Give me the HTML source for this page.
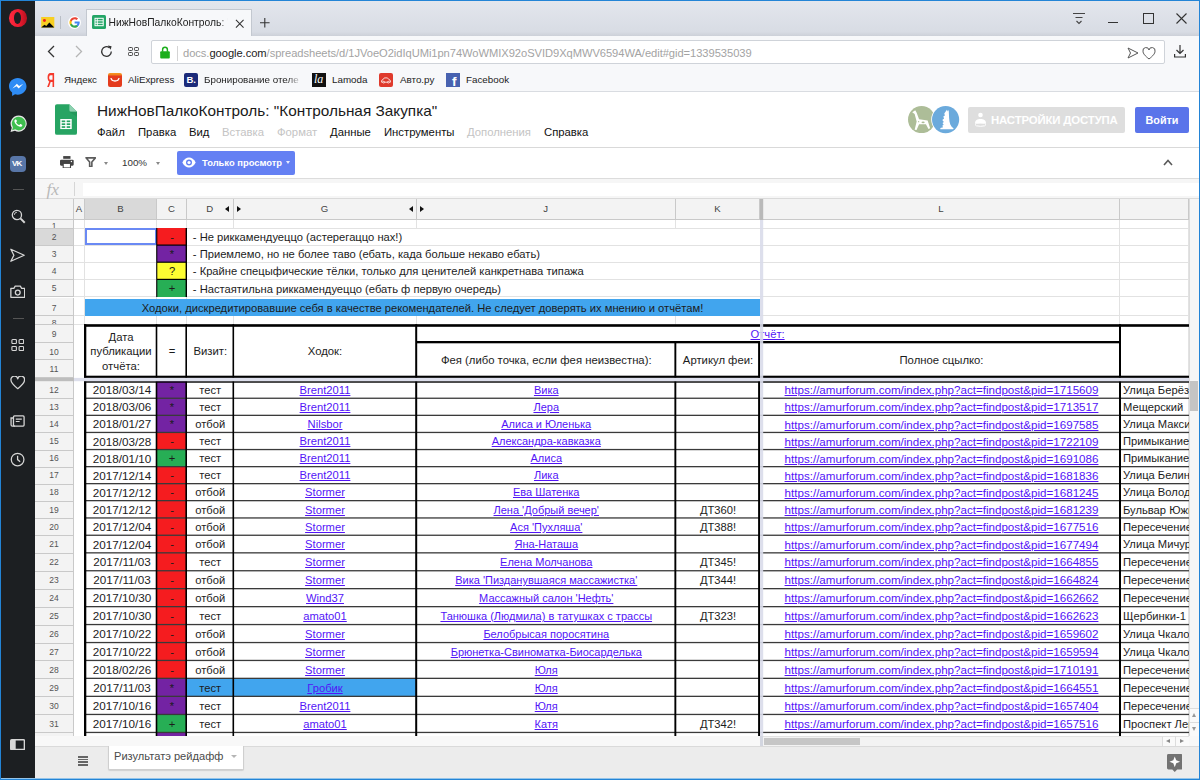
<!DOCTYPE html>
<html lang="ru">
<head>
<meta charset="utf-8">
<title>НижНовПалкоКонтроль: "Контрольная Закупка"</title>
<style>
html,body{margin:0;padding:0;}
body{width:1200px;height:780px;overflow:hidden;position:relative;background:#fff;font-family:"Liberation Sans",sans-serif;color:#222;}
#win{position:absolute;left:0;top:0;width:1200px;height:780px;overflow:hidden;}
#win>div,#grid>div,.abs,#tab,#abox,#menu{position:absolute;}
#frame{left:0;top:0;width:1198px;height:778px;border:1px solid #2384d6;z-index:50;pointer-events:none;box-shadow:inset 0 -1px 0 rgba(42,138,212,.5);}
/* sidebar */
#side{left:1px;top:1px;width:34px;height:777px;background:#1c1f22;}
#side svg,#side div{position:absolute;}
/* tab bar */
#tabs{left:35px;top:1px;width:1164px;height:35px;background:linear-gradient(#e3e6ed,#d8dce4 88%,#ccd0d8);}
#tab{left:51px;top:8px;width:166px;height:28px;background:#f7f8fa;border:1px solid #c3c8d0;border-bottom:none;box-sizing:border-box;}
#tabt{left:21.5px;top:6.5px;font-size:10.3px;color:#222;white-space:nowrap;width:119px;overflow:hidden;-webkit-mask-image:linear-gradient(90deg,#000 94%,transparent);}
/* address row */
#addr{left:35px;top:36px;width:1164px;height:31px;background:#f7f8fa;}
#abox{left:116px;top:4px;width:1014px;height:24px;background:#fff;border:1px solid #cfd3d9;box-sizing:border-box;border-radius:2px;}
#url{left:31px;top:5.5px;font-size:11.17px;color:#a3a3a3;white-space:nowrap;letter-spacing:-0.05px;}
#url b{font-weight:normal;color:#222;}
/* bookmarks */
#bm{left:35px;top:67px;width:1164px;height:24px;background:#f7f8fa;border-bottom:1px solid #d9dce1;}
#bm span{position:absolute;top:7px;font-size:9.8px;color:#222;white-space:nowrap;}
#bm i{position:absolute;top:5.5px;width:14px;height:14px;border-radius:2px;font-style:normal;}
/* sheets header */
#hdr{left:35px;top:92px;width:1164px;height:55px;background:#fff;border-bottom:1px solid #d9d9d9;}
#title{left:62px;top:10px;font-size:15.35px;color:#1a1a1a;white-space:nowrap;}
#menu span{position:absolute;top:34px;font-size:11.3px;color:#111;white-space:nowrap;}
#menu span.dis{color:#c4c4c4;}
#tb{left:35px;top:148px;width:1164px;height:30px;background:#fff;border-bottom:1px solid #dcdcdc;}
#fx{left:35px;top:179px;width:1164px;height:19px;background:#f6f6f6;border-bottom:1px solid #dadada;}
/* grid */
#grid{left:0;top:0;width:1200px;height:780px;}
.ch{background:#f3f3f3;border-right:1px solid #c9c9c9;border-bottom:1px solid #c9c9c9;box-sizing:border-box;text-align:center;font-size:9.6px;line-height:20px;color:#444;}
.ch.sel{background:#d9d9d9;}
.ch i{position:absolute;top:7px;width:0;height:0;border:3.5px solid transparent;}
.ch i.tl{border-right:4.5px solid #111;border-left:none;}
.ch i.tr{border-left:4.5px solid #111;border-right:none;}
.rh{background:#f3f3f3;border-right:1px solid #c9c9c9;border-bottom:1px solid #c9c9c9;box-sizing:border-box;text-align:center;font-size:8.5px;color:#555;}
.rh.sel{background:#d9d9d9;}
.gl{background:#e2e2e2;}
.bk{background:#000;}
.bk2{background:#1a1a1a;}
.cell.dt{font-size:11.7px;}
.cell.ul{font-size:11.6px;}
.cell.fj{font-size:11px;}
.cell{font-size:11.2px;color:#1c1c1c;box-sizing:border-box;}
.cell.c{text-align:center;white-space:nowrap;overflow:hidden;}
.hc{font-size:11.3px;display:flex;align-items:center;justify-content:center;text-align:center;line-height:14.6px;}
.lk{color:#5314f7;text-decoration:underline;}
</style>
</head>
<body>
<div id="win">
<!-- browser chrome -->
<div id="tabs">
  <svg class="abs" style="left:6px;top:16px" width="13.5" height="10.5" viewBox="0 0 15 12"><rect width="15" height="12" fill="#f7cf22"/><circle cx="3.700" cy="4.100" r="1.700" fill="#f0241c"/><path d="M0 12L3.800 8.800 5.800 10.200 9.300 6.200 15 12z" fill="#050505"/></svg>
  <div class="abs" style="left:25px;top:15px;width:1px;height:13px;background:#b9bec6"></div>
  <svg class="abs" style="left:32.500px;top:14.500px" width="13" height="13" viewBox="0 0 13 13"><circle cx="6.500" cy="6.500" r="6.500" fill="#fff"/><g transform="translate(6.500 6.500) scale(1.180) translate(-7 -7.100)"><path d="M11.400 7.100c0-.3 0-.6-.1-.9H7.100v1.700h2.400c-.1.600-.4 1-.9 1.300v1.100h1.400c.9-.8 1.400-1.900 1.400-3.200z" fill="#4285f4"/><path d="M7.100 11.500c1.200 0 2.200-.4 2.900-1.100l-1.400-1.100c-.4.300-.9.400-1.500.4-1.100 0-2.100-.8-2.500-1.800H3.200v1.100c.7 1.500 2.200 2.500 3.900 2.500z" fill="#34a853"/><path d="M4.600 7.900c-.1-.3-.1-.6-.1-.9s.1-.6.100-.9V5H3.200c-.3.600-.5 1.300-.5 2s.2 1.400.5 2l1.400-1.100z" fill="#fbbc05"/><path d="M7.100 4.300c.6 0 1.200.2 1.700.7l1.200-1.200c-.8-.7-1.800-1.100-2.900-1.100-1.700 0-3.200 1-3.900 2.400l1.400 1.100c.4-1.100 1.400-1.900 2.500-1.900z" fill="#ea4335"/></g></svg>
  <div id="tab">
    <svg class="abs" style="left:5px;top:5px" width="14" height="14" viewBox="0 0 14 14"><rect width="14" height="14" rx="1.500" fill="#23a566"/><rect x="3" y="3.300" width="8.200" height="7.400" fill="none" stroke="#fff" stroke-width="1"/><path d="M3 5.800h8.200M3 8.300h8.200M5.300 3.300v7.400" stroke="#fff" stroke-width=".9"/></svg>
    <div id="tabt" class="abs">НижНовПалкоКонтроль: "Контрольная Закупка"</div>
    <svg class="abs" style="left:147.500px;top:9px" width="9.500" height="9.500" viewBox="0 0 10 10"><path d="M1 1l8 8M9 1l-8 8" stroke="#333" stroke-width="1.1"/></svg>
  </div>
  <svg class="abs" style="left:225px;top:17px" width="9.600" height="9.600" viewBox="0 0 11 11"><path d="M5.500 0v11M0 5.500h11" stroke="#333" stroke-width="1.250"/></svg>
  <!-- window controls -->
  <svg class="abs" style="left:1037px;top:10px" width="14" height="14" viewBox="0 0 14 14"><path d="M1 2.500h12M3.500 6.500h7" stroke="#444" stroke-width="1.1"/><path d="M4.500 10l2.500 2.500L9.500 10" stroke="#444" stroke-width="1.1" fill="none"/></svg>
  <div class="abs" style="left:1073px;top:21px;width:10px;height:1px;background:#333"></div>
  <div class="abs" style="left:1108px;top:12px;width:9px;height:9px;border:1px solid #333"></div>
  <svg class="abs" style="left:1141px;top:12px" width="11" height="11" viewBox="0 0 11 11"><path d="M.5.5l10 10M10.500.5l-10 10" stroke="#333" stroke-width="1.100"/></svg>
</div>
<div id="addr">
  <svg class="abs" style="left:12px;top:9px" width="8" height="13" viewBox="0 0 8 13"><path d="M7 1L1.500 6.500 7 12" stroke="#333" stroke-width="1.300" fill="none"/></svg>
  <svg class="abs" style="left:40px;top:9px" width="8" height="13" viewBox="0 0 8 13"><path d="M1 1l5.500 5.500L1 12" stroke="#b5b5b5" stroke-width="1.300" fill="none"/></svg>
  <svg class="abs" style="left:65px;top:9px" width="13" height="13" viewBox="0 0 13 13"><path d="M11.300 6.500A4.800 4.800 0 1 1 9.400 2.700" stroke="#333" stroke-width="1.300" fill="none"/><path d="M7.800 0.600L11.600 1.200 10.600 4.800Z" fill="#333"/></svg>
  <svg class="abs" style="left:93px;top:11px" width="11" height="9" viewBox="0 0 11 9"><g fill="none" stroke="#444" stroke-width="1"><rect x=".5" y=".5" width="4" height="3" rx=".8"/><rect x="6.500" y=".5" width="4" height="3" rx=".8"/><rect x=".5" y="5.500" width="4" height="3" rx=".8"/><rect x="6.500" y="5.500" width="4" height="3" rx=".8"/></g></svg>
  <div id="abox">
    <svg class="abs" style="left:8px;top:5px" width="10" height="12.500" viewBox="0 0 10 13"><path d="M2.500 6V3.800a2.500 2.500 0 0 1 5 0V6" stroke="#1cae1c" stroke-width="1.500" fill="none"/><rect y="5.500" width="10" height="7.500" rx="1" fill="#1cae1c"/></svg>
    <div class="abs" style="left:25px;top:4.500px;width:1px;height:15px;background:#d4d4d4"></div>
    <div id="url" class="abs">docs.<b>google.com</b>/spreadsheets/d/1JVoeO2idIqUMi1pn74WoWMIX92oSVID9XqMWV6594WA/edit#gid=1339535039</div>
    <svg class="abs" style="left:975px;top:6px" width="12" height="12" viewBox="0 0 12 12"><path d="M1 1l10 5-10 5 2.500-5z" stroke="#555" stroke-width="1" fill="none" stroke-linejoin="round"/></svg>
    <svg class="abs" style="left:990px;top:5.500px" width="14" height="13" viewBox="0 0 14 13"><path d="M7 12C3 8.800 1 6.600 1 4.200A3 3 0 0 1 7 3a3 3 0 0 1 6 1.200C13 6.600 11 8.800 7 12z" stroke="#555" stroke-width="1" fill="none"/></svg>
  </div>
  <svg class="abs" style="left:1139px;top:9px" width="12" height="13" viewBox="0 0 12 13"><path d="M6 0v8M2.500 5L6 8.500 9.500 5" stroke="#333" stroke-width="1.200" fill="none"/><path d="M.6 9v3h10.800V9" stroke="#333" stroke-width="1.200" fill="none"/></svg>
</div>
<div id="bm">
  <span style="left:11.500px;top:2px;font-size:19.500px;line-height:22px;color:#f5392b;font-weight:bold;transform:scaleX(.56);transform-origin:left">Я</span>
  <span style="left:29px">Яндекс</span>
  <i style="left:73px;background:linear-gradient(#f6921e 0,#f6921e 8%,#e43b1d 24%)"></i><svg class="abs" style="left:75px;top:9.500px" width="10" height="6" viewBox="0 0 10 6"><path d="M1 1c.5 4 7.500 4 8 0" stroke="#fff" stroke-width="1.300" fill="none"/></svg>
  <span style="left:93px">AliExpress</span>
  <i style="left:149px;background:#1c2b7a;color:#fff;font-size:9.500px;font-weight:bold;line-height:14px;text-indent:2.500px">B.</i>
  <span style="left:169px;width:98px;overflow:hidden;-webkit-mask-image:linear-gradient(90deg,#000 85%,transparent)">Бронирование отеле</span>
  <i style="left:277px;background:#111;color:#fff;font-family:'Liberation Serif',serif;font-style:italic;font-size:12px;line-height:13px;text-indent:2px;border-radius:0">la</i>
  <span style="left:297px">Lamoda</span>
  <i style="left:344px;background:#df3a2c"></i><svg class="abs" style="left:346px;top:9.500px" width="10" height="7" viewBox="0 0 10 7"><path d="M.6 5.200V3.900c0-.7.5-1.100 1.300-1.200L3.300.9h3.200L8 2.700c.9.100 1.400.5 1.400 1.200v1.300z" stroke="#fff" stroke-width=".8" fill="none"/><circle cx="2.700" cy="5.200" r=".9" fill="#df3a2c" stroke="#fff" stroke-width=".7"/><circle cx="7.300" cy="5.200" r=".9" fill="#df3a2c" stroke="#fff" stroke-width=".7"/></svg>
  <span style="left:365px">Авто.ру</span>
  <i style="left:411px;background:#4862b0;color:#fff;font-weight:bold;font-size:13.500px;line-height:17px;text-indent:6px;overflow:hidden;border-radius:0">f</i>
  <span style="left:431px">Facebook</span>
</div>
<!-- Sheets header -->
<div id="hdr">
  <svg class="abs" style="left:20px;top:12px" width="22" height="31" viewBox="0 0 23 32"><path d="M2 0h13l8 8v22a2 2 0 0 1-2 2H2a2 2 0 0 1-2-2V2a2 2 0 0 1 2-2z" fill="#27a463"/><path d="M15 0l8 8h-6a2 2 0 0 1-2-2z" fill="#8ed1b1"/><path d="M15 8h8v5z" fill="#1f8c53" opacity=".5"/><rect x="5.500" y="15.500" width="12" height="10.500" fill="#fff"/><g fill="#27a463"><rect x="7" y="17" width="3.700" height="1.800"/><rect x="12.200" y="17" width="3.700" height="1.800"/><rect x="7" y="20" width="3.700" height="1.800"/><rect x="12.200" y="20" width="3.700" height="1.800"/><rect x="7" y="23" width="3.700" height="1.800"/><rect x="12.200" y="23" width="3.700" height="1.800"/></g></svg>
  <div id="title" class="abs">НижНовПалкоКонтроль: "Контрольная Закупка"</div>
  <div id="menu">
    <span style="left:62px">Файл</span><span style="left:103px">Правка</span><span style="left:154px">Вид</span><span class="dis" style="left:187px">Вставка</span><span class="dis" style="left:242px">Формат</span><span style="left:295px">Данные</span><span style="left:349px">Инструменты</span><span class="dis" style="left:432px">Дополнения</span><span style="left:509px">Справка</span>
  </div>
  <!-- avatars -->
  <svg class="abs" style="left:873px;top:14.300px" width="27.200" height="27.200" viewBox="0 0 27 27"><circle cx="13.500" cy="13.500" r="13.500" fill="#adbd98"/><path d="M4.200 6.200L7.200 4.200 8.600 6.800 11 13.200 19.500 14.500 22 22 20.300 22.800 17.800 18.200 11 18 8.500 23.800 6.600 23.500 8.600 15.500 6.600 8z" fill="#fff"/><ellipse cx="15" cy="16.300" rx="1.600" ry=".8" fill="#adbd98"/><circle cx="10.600" cy="15.600" r=".6" fill="#adbd98"/></svg>
  <svg class="abs" style="left:895.500px;top:13.300px" width="29.200" height="29.200" viewBox="-1 -1 29 29"><circle cx="13.500" cy="13.500" r="14.300" fill="#fff"/><circle cx="13.500" cy="13.500" r="13.500" fill="#6baadc"/><path d="M14.800 3.600L15.800 5.500 16.600 3.800 17 12C17.200 17 18.500 20.500 21.500 22.400L21 23H8.200L8.400 21.800 11 21 10.200 19.500 11.600 18.500 10.400 17 11.800 15.800 10.200 13.800 12 12.500 11.200 10.500 12.800 9.500 12.200 7.500z" fill="#fff"/></svg>
  <!-- buttons -->
  <div class="abs" style="left:932.500px;top:14.500px;width:157px;height:26px;background:#dedede;border-radius:2px;"></div>
  <svg class="abs" style="left:939px;top:20px" width="13" height="15" viewBox="0 0 13 15"><circle cx="6.500" cy="3" r="2.300" fill="#fff"/><path d="M1 11.500c0-3.500 2.500-4.500 5.500-4.500s5.500 1 5.500 4.500z" fill="#fff"/><ellipse cx="6.500" cy="12.500" rx="5.500" ry="1.800" fill="none" stroke="#fff" stroke-width="1"/></svg>
  <div class="abs" style="left:956px;top:21.500px;font-size:11.400px;font-weight:bold;color:#fff;white-space:nowrap;letter-spacing:-0.150px">НАСТРОЙКИ ДОСТУПА</div>
  <div class="abs" style="left:1100px;top:14.500px;width:54px;height:26px;background:#5a74ea;border-radius:2px;color:#fff;font-weight:bold;font-size:10.800px;text-align:center;line-height:26px">Войти</div>
</div>
<div id="tb">
  <svg class="abs" style="left:25px;top:8.400px" width="13.700" height="12" viewBox="0 0 15 13"><rect x="3.500" y="0" width="8" height="3" fill="#444"/><rect x="0" y="4" width="15" height="6.500" rx="1.200" fill="#444"/><rect x="3.500" y="8" width="8" height="5" fill="#fff" stroke="#444" stroke-width="1.200"/><circle cx="12.500" cy="6" r=".8" fill="#fff"/></svg>
  <svg class="abs" style="left:49.600px;top:9.300px" width="11.500" height="10.200" viewBox="0 0 13 12"><path d="M.9 1h11.200L7.800 6v5.200H5.200V6z" fill="none" stroke="#5c5c5c" stroke-width="1.900" stroke-linejoin="round"/></svg>
  <div class="abs" style="left:68.500px;top:14px;border:2.500px solid transparent;border-top:3px solid #888;"></div>
  <div class="abs" style="left:87px;top:9px;font-size:9.800px;color:#333">100%</div>
  <div class="abs" style="left:121px;top:14px;border:2.500px solid transparent;border-top:3px solid #888;"></div>
  <div class="abs" style="left:142px;top:2.500px;width:118px;height:24px;background:#6480f3;border-radius:2px;"></div>
  <svg class="abs" style="left:147px;top:9px" width="14" height="11" viewBox="0 0 14 11"><path d="M.3 5.500C2 2 4.500.5 7 .5s5 1.500 6.700 5C12 9 9.500 10.500 7 10.500S2 9 .3 5.500z" fill="#fff"/><circle cx="7" cy="5.500" r="3" fill="#6480f3"/><circle cx="7" cy="5.500" r="1.600" fill="#fff"/></svg>
  <div class="abs" style="left:167px;top:8.500px;font-size:9.400px;font-weight:bold;color:#fff;white-space:nowrap">Только просмотр</div>
  <div class="abs" style="left:250.500px;top:13px;border:2.500px solid transparent;border-top:3px solid #e8ecff;"></div>
  <svg class="abs" style="left:1128px;top:11px" width="10" height="7" viewBox="0 0 10 7"><path d="M1 6l4-4.500L9 6" stroke="#5a5a5a" stroke-width="1.600" fill="none"/></svg>
</div>
<div id="fx">
  <div class="abs" style="left:11.500px;top:-0.500px;font-family:'Liberation Serif',serif;font-style:italic;font-size:17.500px;line-height:20px;color:#b9b9b9">fx</div>
  <div class="abs" style="left:38.500px;top:3px;width:1px;height:14px;background:#d6d6d6"></div>
  <div class="abs" style="left:48px;top:3.500px;width:1116px;height:13px;background:#fff"></div>
</div>
<div id="grid">
<div class="ch" style="left:74.00px;top:199.00px;width:11.00px;height:21.00px;">A</div>
<div class="ch sel" style="left:85.00px;top:199.00px;width:72.00px;height:21.00px;">B</div>
<div class="ch" style="left:157.00px;top:199.00px;width:30.00px;height:21.00px;">C</div>
<div class="ch" style="left:187.00px;top:199.00px;width:46.50px;height:21.00px;">D<i class="tl" style="right:4px"></i></div>
<div class="ch" style="left:233.50px;top:199.00px;width:183.00px;height:21.00px;">G<i class="tr" style="left:3px"></i><i class="tl" style="right:3px"></i></div>
<div class="ch" style="left:416.50px;top:199.00px;width:259.50px;height:21.00px;">J<i class="tr" style="left:3px"></i></div>
<div class="ch" style="left:676.00px;top:199.00px;width:84.00px;height:21.00px;">K</div>
<div class="ch" style="left:763.00px;top:199.00px;width:357.00px;height:21.00px;">L</div>
<div class="ch" style="left:1120.00px;top:199.00px;width:69.00px;height:21.00px;"></div>
<div class="ch corner" style="left:35.00px;top:199.00px;width:39.00px;height:21.00px;"></div>
<div class="rh" style="left:35.00px;top:220.00px;width:39.00px;height:9.00px;overflow:hidden;"><span style="position:absolute;left:0;right:0;top:0px;line-height:12px">1</span></div>
<div class="rh sel" style="left:35.00px;top:229.00px;width:39.00px;height:17.00px;line-height:16.00px;">2</div>
<div class="rh" style="left:35.00px;top:246.00px;width:39.00px;height:17.00px;line-height:16.00px;">3</div>
<div class="rh" style="left:35.00px;top:263.00px;width:39.00px;height:17.00px;line-height:16.00px;">4</div>
<div class="rh" style="left:35.00px;top:280.00px;width:39.00px;height:17.00px;line-height:16.00px;">5</div>
<div class="rh" style="left:35.00px;top:298.00px;width:39.00px;height:18.00px;line-height:21.00px;">7</div>
<div class="rh" style="left:35.00px;top:316.00px;width:39.00px;height:9.00px;overflow:hidden;"><span style="position:absolute;left:0;right:0;top:1px;line-height:12px">8</span></div>
<div class="rh" style="left:35.00px;top:325.00px;width:39.00px;height:17.50px;line-height:18.50px;">9</div>
<div class="rh" style="left:35.00px;top:342.50px;width:39.00px;height:17.50px;line-height:18.50px;">10</div>
<div class="rh" style="left:35.00px;top:360.00px;width:39.00px;height:17.50px;line-height:18.50px;">11</div>
<div class="rh" style="left:35.00px;top:381.00px;width:39.00px;height:18.00px;line-height:18.91px;">12</div>
<div class="rh" style="left:35.00px;top:399.00px;width:39.00px;height:17.00px;line-height:17.11px;">13</div>
<div class="rh" style="left:35.00px;top:416.00px;width:39.00px;height:17.00px;line-height:17.31px;">14</div>
<div class="rh" style="left:35.00px;top:433.00px;width:39.00px;height:18.00px;line-height:17.51px;">15</div>
<div class="rh" style="left:35.00px;top:451.00px;width:39.00px;height:17.00px;line-height:15.71px;">16</div>
<div class="rh" style="left:35.00px;top:468.00px;width:39.00px;height:17.00px;line-height:15.81px;">17</div>
<div class="rh" style="left:35.00px;top:485.00px;width:39.00px;height:17.00px;line-height:15.81px;">18</div>
<div class="rh" style="left:35.00px;top:502.00px;width:39.00px;height:17.00px;line-height:16.11px;">19</div>
<div class="rh" style="left:35.00px;top:519.00px;width:39.00px;height:17.00px;line-height:16.71px;">20</div>
<div class="rh" style="left:35.00px;top:536.00px;width:39.00px;height:18.00px;line-height:17.61px;">21</div>
<div class="rh" style="left:35.00px;top:554.00px;width:39.00px;height:18.00px;line-height:17.11px;">22</div>
<div class="rh" style="left:35.00px;top:572.00px;width:39.00px;height:18.00px;line-height:16.91px;">23</div>
<div class="rh" style="left:35.00px;top:590.00px;width:39.00px;height:18.00px;line-height:16.81px;">24</div>
<div class="rh" style="left:35.00px;top:608.00px;width:39.00px;height:18.00px;line-height:16.71px;">25</div>
<div class="rh" style="left:35.00px;top:626.00px;width:39.00px;height:18.00px;line-height:16.61px;">26</div>
<div class="rh" style="left:35.00px;top:644.00px;width:39.00px;height:17.00px;line-height:16.51px;">27</div>
<div class="rh" style="left:35.00px;top:661.00px;width:39.00px;height:18.00px;line-height:18.31px;">28</div>
<div class="rh" style="left:35.00px;top:679.00px;width:39.00px;height:18.00px;line-height:18.21px;">29</div>
<div class="rh" style="left:35.00px;top:697.00px;width:39.00px;height:18.00px;line-height:18.31px;">30</div>
<div class="rh" style="left:35.00px;top:715.00px;width:39.00px;height:18.00px;line-height:18.41px;">31</div>
<div class="rh" style="left:35.00px;top:733.00px;width:39.00px;height:3.00px;border-bottom:none;"></div>
<div class="gl" style="left:74.00px;top:228.00px;width:1115.00px;height:1.00px;"></div>
<div class="gl" style="left:74.00px;top:245.00px;width:1115.00px;height:1.00px;"></div>
<div class="gl" style="left:74.00px;top:262.00px;width:1115.00px;height:1.00px;"></div>
<div class="gl" style="left:74.00px;top:279.00px;width:1115.00px;height:1.00px;"></div>
<div class="gl" style="left:74.00px;top:296.00px;width:1115.00px;height:1.00px;"></div>
<div class="gl" style="left:74.00px;top:315.00px;width:1115.00px;height:1.00px;"></div>
<div class="gl" style="left:74.00px;top:324.00px;width:1115.00px;height:1.00px;"></div>
<div class="gl" style="left:84.00px;top:220.00px;width:1.00px;height:105.00px;"></div>
<div class="gl" style="left:156.00px;top:220.00px;width:1.00px;height:105.00px;"></div>
<div class="gl" style="left:186.00px;top:220.00px;width:1.00px;height:105.00px;"></div>
<div class="gl" style="left:1119.00px;top:220.00px;width:1.00px;height:105.00px;"></div>
<div class="gl" style="left:232.50px;top:220.00px;width:1.00px;height:8.00px;"></div>
<div class="gl" style="left:232.50px;top:316.00px;width:1.00px;height:9.00px;"></div>
<div class="gl" style="left:415.50px;top:220.00px;width:1.00px;height:8.00px;"></div>
<div class="gl" style="left:415.50px;top:316.00px;width:1.00px;height:9.00px;"></div>
<div class="gl" style="left:675.00px;top:220.00px;width:1.00px;height:8.00px;"></div>
<div class="gl" style="left:675.00px;top:316.00px;width:1.00px;height:9.00px;"></div>
<div class="gl" style="left:1188.00px;top:220.00px;width:1.00px;height:516.00px;"></div>
<div class="cell" style="left:157.00px;top:228.00px;width:30.00px;height:17.00px;background:#f51c1f;text-align:center;line-height:18.00px;">-</div>
<div class="cell" style="left:192.80px;top:228.00px;width:560.00px;height:17.00px;line-height:19.00px;white-space:nowrap;">- Не риккамендуеццо (астерегаццо нах!)</div>
<div class="cell" style="left:157.00px;top:245.00px;width:30.00px;height:17.00px;background:#7323a3;text-align:center;line-height:18.00px;">*</div>
<div class="cell" style="left:192.80px;top:245.00px;width:560.00px;height:17.00px;line-height:19.00px;white-space:nowrap;">- Приемлемо, но не более таво (ебать, када больше некаво ебать)</div>
<div class="cell" style="left:157.00px;top:262.00px;width:30.00px;height:17.00px;background:#fdfd32;text-align:center;line-height:18.00px;">?</div>
<div class="cell" style="left:192.80px;top:262.00px;width:560.00px;height:17.00px;line-height:19.00px;white-space:nowrap;">- Крайне спецыфические тёлки, только для ценителей канкретнава типажа</div>
<div class="cell" style="left:157.00px;top:279.00px;width:30.00px;height:18.00px;background:#27ae55;text-align:center;line-height:19.00px;">+</div>
<div class="cell" style="left:192.80px;top:279.00px;width:560.00px;height:18.00px;line-height:20.00px;white-space:nowrap;">- Настаятильна риккамендуеццо (ебать ф первую очередь)</div>
<div class="" style="left:85.00px;top:228.00px;width:72.00px;height:17.00px;position:absolute;border:2px solid #6a89f4;box-sizing:border-box;background:#fff;"></div>
<div class="cell" style="left:85.00px;top:298.60px;width:675.00px;height:17.40px;background:#41a5ee;text-align:center;line-height:19.5px;white-space:nowrap;">Ходоки, дискредитировавшие себя в качестве рекомендателей. Не следует доверять их мнению и отчётам!</div>
<div class="cell hc" style="left:85.00px;top:326.00px;width:72.00px;height:51.00px;"><span>Дата<br>публикации<br>отчёта:</span></div>
<div class="cell hc" style="left:157.00px;top:326.00px;width:30.00px;height:51.00px;"><span>=</span></div>
<div class="cell hc" style="left:187.00px;top:326.00px;width:46.50px;height:51.00px;"><span>Визит:</span></div>
<div class="cell hc" style="left:233.50px;top:326.00px;width:183.00px;height:51.00px;"><span>Ходок:</span></div>
<div class="cell" style="left:416.50px;top:326.00px;width:703.50px;height:17.00px;text-align:center;line-height:17px;"><a class="lk" style="position:absolute;left:334px;top:0">Отчёт:</a></div>
<div class="cell hc" style="left:416.50px;top:343.00px;width:259.50px;height:34.00px;"><span>Фея (либо точка, если фея неизвестна):</span></div>
<div class="cell hc" style="left:676.00px;top:343.00px;width:84.00px;height:34.00px;"><span>Артикул феи:</span></div>
<div class="cell hc" style="left:763.00px;top:343.00px;width:357.00px;height:34.00px;"><span>Полное сцылко:</span></div>
<div class="cell c dt" style="left:86.00px;top:381.00px;width:72.00px;height:17.00px;line-height:18.59px;">2018/03/14</div>
<div class="cell c" style="left:157.00px;top:381.00px;width:30.00px;height:17.00px;line-height:18.94px;background:#7323a3;">*</div>
<div class="cell c" style="left:187.00px;top:381.00px;width:46.50px;height:17.00px;line-height:18.94px;">тест</div>
<div class="cell c" style="left:233.50px;top:381.00px;width:183.00px;height:17.00px;line-height:18.94px;"><a class="lk">Brent2011</a></div>
<div class="cell c fj" style="left:416.50px;top:381.00px;width:259.50px;height:17.00px;line-height:18.94px;"><a class="lk">Вика</a></div>
<div class="cell c" style="left:676.00px;top:381.00px;width:84.00px;height:17.00px;line-height:18.94px;"></div>
<div class="cell c ul" style="left:763.00px;top:381.00px;width:357.00px;height:17.00px;line-height:18.66px;"><a class="lk">https://amurforum.com/index.php?act=findpost&amp;pid=1715609</a></div>
<div class="cell" style="left:1123.00px;top:381.00px;width:66.00px;height:17.00px;line-height:18.94px;white-space:nowrap;overflow:hidden;">Улица Берёзовская</div>
<div class="cell c dt" style="left:86.00px;top:398.00px;width:72.00px;height:17.00px;line-height:18.79px;">2018/03/06</div>
<div class="cell c" style="left:157.00px;top:398.00px;width:30.00px;height:17.00px;line-height:19.14px;background:#7323a3;">*</div>
<div class="cell c" style="left:187.00px;top:398.00px;width:46.50px;height:17.00px;line-height:19.14px;">тест</div>
<div class="cell c" style="left:233.50px;top:398.00px;width:183.00px;height:17.00px;line-height:19.14px;"><a class="lk">Brent2011</a></div>
<div class="cell c fj" style="left:416.50px;top:398.00px;width:259.50px;height:17.00px;line-height:19.14px;"><a class="lk">Лера</a></div>
<div class="cell c" style="left:676.00px;top:398.00px;width:84.00px;height:17.00px;line-height:19.14px;"></div>
<div class="cell c ul" style="left:763.00px;top:398.00px;width:357.00px;height:17.00px;line-height:18.86px;"><a class="lk">https://amurforum.com/index.php?act=findpost&amp;pid=1713517</a></div>
<div class="cell" style="left:1123.00px;top:398.00px;width:66.00px;height:17.00px;line-height:19.14px;white-space:nowrap;overflow:hidden;">Мещерский</div>
<div class="cell c dt" style="left:86.00px;top:415.00px;width:72.00px;height:17.00px;line-height:18.99px;">2018/01/27</div>
<div class="cell c" style="left:157.00px;top:415.00px;width:30.00px;height:17.00px;line-height:19.34px;background:#7323a3;">*</div>
<div class="cell c" style="left:187.00px;top:415.00px;width:46.50px;height:17.00px;line-height:19.34px;">отбой</div>
<div class="cell c" style="left:233.50px;top:415.00px;width:183.00px;height:17.00px;line-height:19.34px;"><a class="lk">Nilsbor</a></div>
<div class="cell c fj" style="left:416.50px;top:415.00px;width:259.50px;height:17.00px;line-height:19.34px;"><a class="lk">Алиса и Юленька</a></div>
<div class="cell c" style="left:676.00px;top:415.00px;width:84.00px;height:17.00px;line-height:19.34px;"></div>
<div class="cell c ul" style="left:763.00px;top:415.00px;width:357.00px;height:17.00px;line-height:19.06px;"><a class="lk">https://amurforum.com/index.php?act=findpost&amp;pid=1697585</a></div>
<div class="cell" style="left:1123.00px;top:415.00px;width:66.00px;height:17.00px;line-height:19.34px;white-space:nowrap;overflow:hidden;">Улица Максима Горького</div>
<div class="cell c dt" style="left:86.00px;top:432.00px;width:72.00px;height:18.00px;line-height:19.19px;">2018/03/28</div>
<div class="cell c" style="left:157.00px;top:432.00px;width:30.00px;height:18.00px;line-height:19.54px;background:#f51c1f;">-</div>
<div class="cell c" style="left:187.00px;top:432.00px;width:46.50px;height:18.00px;line-height:19.54px;">тест</div>
<div class="cell c" style="left:233.50px;top:432.00px;width:183.00px;height:18.00px;line-height:19.54px;"><a class="lk">Brent2011</a></div>
<div class="cell c fj" style="left:416.50px;top:432.00px;width:259.50px;height:18.00px;line-height:19.54px;"><a class="lk">Александра-кавказка</a></div>
<div class="cell c" style="left:676.00px;top:432.00px;width:84.00px;height:18.00px;line-height:19.54px;"></div>
<div class="cell c ul" style="left:763.00px;top:432.00px;width:357.00px;height:18.00px;line-height:19.26px;"><a class="lk">https://amurforum.com/index.php?act=findpost&amp;pid=1722109</a></div>
<div class="cell" style="left:1123.00px;top:432.00px;width:66.00px;height:18.00px;line-height:19.54px;white-space:nowrap;overflow:hidden;">Примыкание улицы</div>
<div class="cell c dt" style="left:86.00px;top:450.00px;width:72.00px;height:17.00px;line-height:17.39px;">2018/01/10</div>
<div class="cell c" style="left:157.00px;top:450.00px;width:30.00px;height:17.00px;line-height:17.74px;background:#27ae55;">+</div>
<div class="cell c" style="left:187.00px;top:450.00px;width:46.50px;height:17.00px;line-height:17.74px;">тест</div>
<div class="cell c" style="left:233.50px;top:450.00px;width:183.00px;height:17.00px;line-height:17.74px;"><a class="lk">Brent2011</a></div>
<div class="cell c fj" style="left:416.50px;top:450.00px;width:259.50px;height:17.00px;line-height:17.74px;"><a class="lk">Алиса</a></div>
<div class="cell c" style="left:676.00px;top:450.00px;width:84.00px;height:17.00px;line-height:17.74px;"></div>
<div class="cell c ul" style="left:763.00px;top:450.00px;width:357.00px;height:17.00px;line-height:17.46px;"><a class="lk">https://amurforum.com/index.php?act=findpost&amp;pid=1691086</a></div>
<div class="cell" style="left:1123.00px;top:450.00px;width:66.00px;height:17.00px;line-height:17.74px;white-space:nowrap;overflow:hidden;">Примыкание улицы</div>
<div class="cell c dt" style="left:86.00px;top:467.00px;width:72.00px;height:17.00px;line-height:17.49px;">2017/12/14</div>
<div class="cell c" style="left:157.00px;top:467.00px;width:30.00px;height:17.00px;line-height:17.84px;background:#f51c1f;">-</div>
<div class="cell c" style="left:187.00px;top:467.00px;width:46.50px;height:17.00px;line-height:17.84px;">тест</div>
<div class="cell c" style="left:233.50px;top:467.00px;width:183.00px;height:17.00px;line-height:17.84px;"><a class="lk">Brent2011</a></div>
<div class="cell c fj" style="left:416.50px;top:467.00px;width:259.50px;height:17.00px;line-height:17.84px;"><a class="lk">Лика</a></div>
<div class="cell c" style="left:676.00px;top:467.00px;width:84.00px;height:17.00px;line-height:17.84px;"></div>
<div class="cell c ul" style="left:763.00px;top:467.00px;width:357.00px;height:17.00px;line-height:17.56px;"><a class="lk">https://amurforum.com/index.php?act=findpost&amp;pid=1681836</a></div>
<div class="cell" style="left:1123.00px;top:467.00px;width:66.00px;height:17.00px;line-height:17.84px;white-space:nowrap;overflow:hidden;">Улица Белинского</div>
<div class="cell c dt" style="left:86.00px;top:484.00px;width:72.00px;height:17.00px;line-height:17.49px;">2017/12/12</div>
<div class="cell c" style="left:157.00px;top:484.00px;width:30.00px;height:17.00px;line-height:17.84px;background:#f51c1f;">-</div>
<div class="cell c" style="left:187.00px;top:484.00px;width:46.50px;height:17.00px;line-height:17.84px;">отбой</div>
<div class="cell c" style="left:233.50px;top:484.00px;width:183.00px;height:17.00px;line-height:17.84px;"><a class="lk">Stormer</a></div>
<div class="cell c fj" style="left:416.50px;top:484.00px;width:259.50px;height:17.00px;line-height:17.84px;"><a class="lk">Ева Шатенка</a></div>
<div class="cell c" style="left:676.00px;top:484.00px;width:84.00px;height:17.00px;line-height:17.84px;"></div>
<div class="cell c ul" style="left:763.00px;top:484.00px;width:357.00px;height:17.00px;line-height:17.56px;"><a class="lk">https://amurforum.com/index.php?act=findpost&amp;pid=1681245</a></div>
<div class="cell" style="left:1123.00px;top:484.00px;width:66.00px;height:17.00px;line-height:17.84px;white-space:nowrap;overflow:hidden;">Улица Володарского</div>
<div class="cell c dt" style="left:86.00px;top:501.00px;width:72.00px;height:17.00px;line-height:17.79px;">2017/12/12</div>
<div class="cell c" style="left:157.00px;top:501.00px;width:30.00px;height:17.00px;line-height:18.14px;background:#f51c1f;">-</div>
<div class="cell c" style="left:187.00px;top:501.00px;width:46.50px;height:17.00px;line-height:18.14px;">отбой</div>
<div class="cell c" style="left:233.50px;top:501.00px;width:183.00px;height:17.00px;line-height:18.14px;"><a class="lk">Stormer</a></div>
<div class="cell c fj" style="left:416.50px;top:501.00px;width:259.50px;height:17.00px;line-height:18.14px;"><a class="lk">Лена 'Добрый вечер'</a></div>
<div class="cell c" style="left:676.00px;top:501.00px;width:84.00px;height:17.00px;line-height:18.14px;">ДТ360!</div>
<div class="cell c ul" style="left:763.00px;top:501.00px;width:357.00px;height:17.00px;line-height:17.86px;"><a class="lk">https://amurforum.com/index.php?act=findpost&amp;pid=1681239</a></div>
<div class="cell" style="left:1123.00px;top:501.00px;width:66.00px;height:17.00px;line-height:18.14px;white-space:nowrap;overflow:hidden;">Бульвар Южный</div>
<div class="cell c dt" style="left:86.00px;top:518.00px;width:72.00px;height:17.00px;line-height:18.39px;">2017/12/04</div>
<div class="cell c" style="left:157.00px;top:518.00px;width:30.00px;height:17.00px;line-height:18.74px;background:#f51c1f;">-</div>
<div class="cell c" style="left:187.00px;top:518.00px;width:46.50px;height:17.00px;line-height:18.74px;">отбой</div>
<div class="cell c" style="left:233.50px;top:518.00px;width:183.00px;height:17.00px;line-height:18.74px;"><a class="lk">Stormer</a></div>
<div class="cell c fj" style="left:416.50px;top:518.00px;width:259.50px;height:17.00px;line-height:18.74px;"><a class="lk">Ася 'Пухляша'</a></div>
<div class="cell c" style="left:676.00px;top:518.00px;width:84.00px;height:17.00px;line-height:18.74px;">ДТ388!</div>
<div class="cell c ul" style="left:763.00px;top:518.00px;width:357.00px;height:17.00px;line-height:18.46px;"><a class="lk">https://amurforum.com/index.php?act=findpost&amp;pid=1677516</a></div>
<div class="cell" style="left:1123.00px;top:518.00px;width:66.00px;height:17.00px;line-height:18.74px;white-space:nowrap;overflow:hidden;">Пересечение улиц</div>
<div class="cell c dt" style="left:86.00px;top:535.00px;width:72.00px;height:18.00px;line-height:19.29px;">2017/12/04</div>
<div class="cell c" style="left:157.00px;top:535.00px;width:30.00px;height:18.00px;line-height:19.64px;background:#f51c1f;">-</div>
<div class="cell c" style="left:187.00px;top:535.00px;width:46.50px;height:18.00px;line-height:19.64px;">отбой</div>
<div class="cell c" style="left:233.50px;top:535.00px;width:183.00px;height:18.00px;line-height:19.64px;"><a class="lk">Stormer</a></div>
<div class="cell c fj" style="left:416.50px;top:535.00px;width:259.50px;height:18.00px;line-height:19.64px;"><a class="lk">Яна-Наташа</a></div>
<div class="cell c" style="left:676.00px;top:535.00px;width:84.00px;height:18.00px;line-height:19.64px;"></div>
<div class="cell c ul" style="left:763.00px;top:535.00px;width:357.00px;height:18.00px;line-height:19.36px;"><a class="lk">https://amurforum.com/index.php?act=findpost&amp;pid=1677494</a></div>
<div class="cell" style="left:1123.00px;top:535.00px;width:66.00px;height:18.00px;line-height:19.64px;white-space:nowrap;overflow:hidden;">Улица Мичурина</div>
<div class="cell c dt" style="left:86.00px;top:553.00px;width:72.00px;height:18.00px;line-height:18.79px;">2017/11/03</div>
<div class="cell c" style="left:157.00px;top:553.00px;width:30.00px;height:18.00px;line-height:19.14px;background:#f51c1f;">-</div>
<div class="cell c" style="left:187.00px;top:553.00px;width:46.50px;height:18.00px;line-height:19.14px;">тест</div>
<div class="cell c" style="left:233.50px;top:553.00px;width:183.00px;height:18.00px;line-height:19.14px;"><a class="lk">Stormer</a></div>
<div class="cell c fj" style="left:416.50px;top:553.00px;width:259.50px;height:18.00px;line-height:19.14px;"><a class="lk">Елена Молчанова</a></div>
<div class="cell c" style="left:676.00px;top:553.00px;width:84.00px;height:18.00px;line-height:19.14px;">ДТ345!</div>
<div class="cell c ul" style="left:763.00px;top:553.00px;width:357.00px;height:18.00px;line-height:18.86px;"><a class="lk">https://amurforum.com/index.php?act=findpost&amp;pid=1664855</a></div>
<div class="cell" style="left:1123.00px;top:553.00px;width:66.00px;height:18.00px;line-height:19.14px;white-space:nowrap;overflow:hidden;">Пересечение улиц</div>
<div class="cell c dt" style="left:86.00px;top:571.00px;width:72.00px;height:18.00px;line-height:18.59px;">2017/11/03</div>
<div class="cell c" style="left:157.00px;top:571.00px;width:30.00px;height:18.00px;line-height:18.94px;background:#f51c1f;">-</div>
<div class="cell c" style="left:187.00px;top:571.00px;width:46.50px;height:18.00px;line-height:18.94px;">отбой</div>
<div class="cell c" style="left:233.50px;top:571.00px;width:183.00px;height:18.00px;line-height:18.94px;"><a class="lk">Stormer</a></div>
<div class="cell c fj" style="left:416.50px;top:571.00px;width:259.50px;height:18.00px;line-height:18.94px;"><a class="lk">Вика 'Пизданувшаяся массажистка'</a></div>
<div class="cell c" style="left:676.00px;top:571.00px;width:84.00px;height:18.00px;line-height:18.94px;">ДТ344!</div>
<div class="cell c ul" style="left:763.00px;top:571.00px;width:357.00px;height:18.00px;line-height:18.66px;"><a class="lk">https://amurforum.com/index.php?act=findpost&amp;pid=1664824</a></div>
<div class="cell" style="left:1123.00px;top:571.00px;width:66.00px;height:18.00px;line-height:18.94px;white-space:nowrap;overflow:hidden;">Пересечение улиц</div>
<div class="cell c dt" style="left:86.00px;top:589.00px;width:72.00px;height:18.00px;line-height:18.49px;">2017/10/30</div>
<div class="cell c" style="left:157.00px;top:589.00px;width:30.00px;height:18.00px;line-height:18.84px;background:#f51c1f;">-</div>
<div class="cell c" style="left:187.00px;top:589.00px;width:46.50px;height:18.00px;line-height:18.84px;">отбой</div>
<div class="cell c" style="left:233.50px;top:589.00px;width:183.00px;height:18.00px;line-height:18.84px;"><a class="lk">Wind37</a></div>
<div class="cell c fj" style="left:416.50px;top:589.00px;width:259.50px;height:18.00px;line-height:18.84px;"><a class="lk">Массажный салон 'Нефть'</a></div>
<div class="cell c" style="left:676.00px;top:589.00px;width:84.00px;height:18.00px;line-height:18.84px;"></div>
<div class="cell c ul" style="left:763.00px;top:589.00px;width:357.00px;height:18.00px;line-height:18.56px;"><a class="lk">https://amurforum.com/index.php?act=findpost&amp;pid=1662662</a></div>
<div class="cell" style="left:1123.00px;top:589.00px;width:66.00px;height:18.00px;line-height:18.84px;white-space:nowrap;overflow:hidden;">Пересечение улиц</div>
<div class="cell c dt" style="left:86.00px;top:607.00px;width:72.00px;height:18.00px;line-height:18.39px;">2017/10/30</div>
<div class="cell c" style="left:157.00px;top:607.00px;width:30.00px;height:18.00px;line-height:18.74px;background:#f51c1f;">-</div>
<div class="cell c" style="left:187.00px;top:607.00px;width:46.50px;height:18.00px;line-height:18.74px;">тест</div>
<div class="cell c" style="left:233.50px;top:607.00px;width:183.00px;height:18.00px;line-height:18.74px;"><a class="lk">amato01</a></div>
<div class="cell c fj" style="left:416.50px;top:607.00px;width:259.50px;height:18.00px;line-height:18.74px;"><a class="lk">Танюшка (Людмила) в татушках с трассы</a></div>
<div class="cell c" style="left:676.00px;top:607.00px;width:84.00px;height:18.00px;line-height:18.74px;">ДТ323!</div>
<div class="cell c ul" style="left:763.00px;top:607.00px;width:357.00px;height:18.00px;line-height:18.46px;"><a class="lk">https://amurforum.com/index.php?act=findpost&amp;pid=1662623</a></div>
<div class="cell" style="left:1123.00px;top:607.00px;width:66.00px;height:18.00px;line-height:18.74px;white-space:nowrap;overflow:hidden;">Щербинки-1</div>
<div class="cell c dt" style="left:86.00px;top:625.00px;width:72.00px;height:18.00px;line-height:18.29px;">2017/10/22</div>
<div class="cell c" style="left:157.00px;top:625.00px;width:30.00px;height:18.00px;line-height:18.64px;background:#f51c1f;">-</div>
<div class="cell c" style="left:187.00px;top:625.00px;width:46.50px;height:18.00px;line-height:18.64px;">отбой</div>
<div class="cell c" style="left:233.50px;top:625.00px;width:183.00px;height:18.00px;line-height:18.64px;"><a class="lk">Stormer</a></div>
<div class="cell c fj" style="left:416.50px;top:625.00px;width:259.50px;height:18.00px;line-height:18.64px;"><a class="lk">Белобрысая поросятина</a></div>
<div class="cell c" style="left:676.00px;top:625.00px;width:84.00px;height:18.00px;line-height:18.64px;"></div>
<div class="cell c ul" style="left:763.00px;top:625.00px;width:357.00px;height:18.00px;line-height:18.36px;"><a class="lk">https://amurforum.com/index.php?act=findpost&amp;pid=1659602</a></div>
<div class="cell" style="left:1123.00px;top:625.00px;width:66.00px;height:18.00px;line-height:18.64px;white-space:nowrap;overflow:hidden;">Улица Чкалова</div>
<div class="cell c dt" style="left:86.00px;top:643.00px;width:72.00px;height:17.00px;line-height:18.19px;">2017/10/22</div>
<div class="cell c" style="left:157.00px;top:643.00px;width:30.00px;height:17.00px;line-height:18.54px;background:#f51c1f;">-</div>
<div class="cell c" style="left:187.00px;top:643.00px;width:46.50px;height:17.00px;line-height:18.54px;">отбой</div>
<div class="cell c" style="left:233.50px;top:643.00px;width:183.00px;height:17.00px;line-height:18.54px;"><a class="lk">Stormer</a></div>
<div class="cell c fj" style="left:416.50px;top:643.00px;width:259.50px;height:17.00px;line-height:18.54px;"><a class="lk">Брюнетка-Свиноматка-Биосарделька</a></div>
<div class="cell c" style="left:676.00px;top:643.00px;width:84.00px;height:17.00px;line-height:18.54px;"></div>
<div class="cell c ul" style="left:763.00px;top:643.00px;width:357.00px;height:17.00px;line-height:18.26px;"><a class="lk">https://amurforum.com/index.php?act=findpost&amp;pid=1659594</a></div>
<div class="cell" style="left:1123.00px;top:643.00px;width:66.00px;height:17.00px;line-height:18.54px;white-space:nowrap;overflow:hidden;">Улица Чкалова</div>
<div class="cell c dt" style="left:86.00px;top:660.00px;width:72.00px;height:18.00px;line-height:19.99px;">2018/02/26</div>
<div class="cell c" style="left:157.00px;top:660.00px;width:30.00px;height:18.00px;line-height:20.34px;background:#f51c1f;">-</div>
<div class="cell c" style="left:187.00px;top:660.00px;width:46.50px;height:18.00px;line-height:20.34px;">отбой</div>
<div class="cell c" style="left:233.50px;top:660.00px;width:183.00px;height:18.00px;line-height:20.34px;"><a class="lk">Stormer</a></div>
<div class="cell c fj" style="left:416.50px;top:660.00px;width:259.50px;height:18.00px;line-height:20.34px;"><a class="lk">Юля</a></div>
<div class="cell c" style="left:676.00px;top:660.00px;width:84.00px;height:18.00px;line-height:20.34px;"></div>
<div class="cell c ul" style="left:763.00px;top:660.00px;width:357.00px;height:18.00px;line-height:20.06px;"><a class="lk">https://amurforum.com/index.php?act=findpost&amp;pid=1710191</a></div>
<div class="cell" style="left:1123.00px;top:660.00px;width:66.00px;height:18.00px;line-height:20.34px;white-space:nowrap;overflow:hidden;">Пересечение улиц</div>
<div class="cell c dt" style="left:86.00px;top:678.00px;width:72.00px;height:18.00px;line-height:19.89px;">2017/11/03</div>
<div class="cell c" style="left:157.00px;top:678.00px;width:30.00px;height:18.00px;line-height:20.24px;background:#7323a3;">*</div>
<div class="cell c" style="left:187.00px;top:678.00px;width:46.50px;height:18.00px;line-height:20.24px;background:#41a5ee;">тест</div>
<div class="cell c" style="left:233.50px;top:678.00px;width:183.00px;height:18.00px;line-height:20.24px;background:#41a5ee;"><a class="lk">Гробик</a></div>
<div class="cell c fj" style="left:416.50px;top:678.00px;width:259.50px;height:18.00px;line-height:20.24px;"><a class="lk">Юля</a></div>
<div class="cell c" style="left:676.00px;top:678.00px;width:84.00px;height:18.00px;line-height:20.24px;"></div>
<div class="cell c ul" style="left:763.00px;top:678.00px;width:357.00px;height:18.00px;line-height:19.96px;"><a class="lk">https://amurforum.com/index.php?act=findpost&amp;pid=1664551</a></div>
<div class="cell" style="left:1123.00px;top:678.00px;width:66.00px;height:18.00px;line-height:20.24px;white-space:nowrap;overflow:hidden;">Пересечение улиц</div>
<div class="cell c dt" style="left:86.00px;top:696.00px;width:72.00px;height:18.00px;line-height:19.99px;">2017/10/16</div>
<div class="cell c" style="left:157.00px;top:696.00px;width:30.00px;height:18.00px;line-height:20.34px;background:#7323a3;">*</div>
<div class="cell c" style="left:187.00px;top:696.00px;width:46.50px;height:18.00px;line-height:20.34px;">тест</div>
<div class="cell c" style="left:233.50px;top:696.00px;width:183.00px;height:18.00px;line-height:20.34px;"><a class="lk">Brent2011</a></div>
<div class="cell c fj" style="left:416.50px;top:696.00px;width:259.50px;height:18.00px;line-height:20.34px;"><a class="lk">Юля</a></div>
<div class="cell c" style="left:676.00px;top:696.00px;width:84.00px;height:18.00px;line-height:20.34px;"></div>
<div class="cell c ul" style="left:763.00px;top:696.00px;width:357.00px;height:18.00px;line-height:20.06px;"><a class="lk">https://amurforum.com/index.php?act=findpost&amp;pid=1657404</a></div>
<div class="cell" style="left:1123.00px;top:696.00px;width:66.00px;height:18.00px;line-height:20.34px;white-space:nowrap;overflow:hidden;">Пересечение улиц</div>
<div class="cell c dt" style="left:86.00px;top:714.00px;width:72.00px;height:18.00px;line-height:20.09px;">2017/10/16</div>
<div class="cell c" style="left:157.00px;top:714.00px;width:30.00px;height:18.00px;line-height:20.44px;background:#27ae55;">+</div>
<div class="cell c" style="left:187.00px;top:714.00px;width:46.50px;height:18.00px;line-height:20.44px;">тест</div>
<div class="cell c" style="left:233.50px;top:714.00px;width:183.00px;height:18.00px;line-height:20.44px;"><a class="lk">amato01</a></div>
<div class="cell c fj" style="left:416.50px;top:714.00px;width:259.50px;height:18.00px;line-height:20.44px;"><a class="lk">Катя</a></div>
<div class="cell c" style="left:676.00px;top:714.00px;width:84.00px;height:18.00px;line-height:20.44px;">ДТ342!</div>
<div class="cell c ul" style="left:763.00px;top:714.00px;width:357.00px;height:18.00px;line-height:20.16px;"><a class="lk">https://amurforum.com/index.php?act=findpost&amp;pid=1657516</a></div>
<div class="cell" style="left:1123.00px;top:714.00px;width:66.00px;height:18.00px;line-height:20.44px;white-space:nowrap;overflow:hidden;">Проспект Ленина</div>
<div class="cell" style="left:157.00px;top:732.50px;width:30.00px;height:3.50px;background:#7323a3;"></div>
<svg class="abs" style="left:0;top:0" width="1200" height="780" viewBox="0 0 1200 780"><rect x="84.00" y="324.20" width="1105.00" height="2.60" fill="#000"/><rect x="84.00" y="375.70" width="1105.00" height="2.20" fill="#000"/><rect x="416.00" y="341.00" width="704.00" height="2.30" fill="#000"/><rect x="84.00" y="324.20" width="2.30" height="53.70" fill="#000"/><rect x="155.70" y="324.20" width="1.60" height="53.70" fill="#000"/><rect x="185.40" y="324.20" width="1.60" height="53.70" fill="#000"/><rect x="232.50" y="324.20" width="1.60" height="53.70" fill="#000"/><rect x="415.20" y="324.20" width="2.00" height="53.70" fill="#000"/><rect x="1119.00" y="324.20" width="2.00" height="53.70" fill="#000"/><rect x="674.40" y="342.00" width="1.90" height="35.90" fill="#000"/><rect x="758.10" y="342.00" width="1.90" height="35.90" fill="#000"/><rect x="84.00" y="381.20" width="1105.00" height="1.50" fill="#000"/><rect x="85.00" y="397.60" width="1104.00" height="1.30" fill="#3a3a3a"/><rect x="85.00" y="414.70" width="1104.00" height="1.30" fill="#3a3a3a"/><rect x="85.00" y="431.80" width="1104.00" height="1.30" fill="#3a3a3a"/><rect x="85.00" y="448.90" width="1104.00" height="1.30" fill="#3a3a3a"/><rect x="85.00" y="466.00" width="1104.00" height="1.30" fill="#3a3a3a"/><rect x="85.00" y="483.00" width="1104.00" height="1.30" fill="#3a3a3a"/><rect x="85.00" y="500.00" width="1104.00" height="1.30" fill="#3a3a3a"/><rect x="85.00" y="517.30" width="1104.00" height="1.30" fill="#3a3a3a"/><rect x="85.00" y="534.60" width="1104.00" height="1.30" fill="#3a3a3a"/><rect x="85.00" y="552.20" width="1104.00" height="1.30" fill="#3a3a3a"/><rect x="85.00" y="570.10" width="1104.00" height="1.30" fill="#3a3a3a"/><rect x="85.00" y="588.00" width="1104.00" height="1.30" fill="#3a3a3a"/><rect x="85.00" y="606.00" width="1104.00" height="1.30" fill="#3a3a3a"/><rect x="85.00" y="623.90" width="1104.00" height="1.30" fill="#3a3a3a"/><rect x="85.00" y="641.90" width="1104.00" height="1.30" fill="#3a3a3a"/><rect x="85.00" y="659.80" width="1104.00" height="1.30" fill="#3a3a3a"/><rect x="85.00" y="677.70" width="1104.00" height="1.30" fill="#3a3a3a"/><rect x="85.00" y="695.70" width="1104.00" height="1.30" fill="#3a3a3a"/><rect x="85.00" y="713.80" width="1104.00" height="1.30" fill="#3a3a3a"/><rect x="85.00" y="731.80" width="1104.00" height="1.30" fill="#3a3a3a"/><rect x="84.00" y="381.20" width="2.30" height="354.80" fill="#000"/><rect x="155.70" y="381.20" width="1.60" height="354.80" fill="#000"/><rect x="185.40" y="381.20" width="1.60" height="354.80" fill="#000"/><rect x="232.50" y="381.20" width="1.60" height="354.80" fill="#000"/><rect x="415.20" y="381.20" width="2.00" height="354.80" fill="#000"/><rect x="1119.00" y="381.20" width="2.00" height="354.80" fill="#000"/><rect x="674.40" y="381.20" width="1.90" height="354.80" fill="#000"/><rect x="758.10" y="381.20" width="1.90" height="354.80" fill="#000"/><rect x="156.20" y="228.00" width="1.10" height="69.00" fill="#000"/><rect x="185.60" y="228.00" width="1.40" height="69.00" fill="#000"/><rect x="157.00" y="244.50" width="29.00" height="1.20" fill="#000"/><rect x="157.00" y="261.60" width="29.00" height="1.20" fill="#000"/><rect x="157.00" y="278.80" width="29.00" height="1.20" fill="#000"/><rect x="35" y="377.9" width="39" height="3.3" fill="#bdbdbd"/><rect x="74" y="377.9" width="1115.00" height="3.3" fill="#d9dcea" fill-opacity=".9"/><rect x="760" y="199" width="3.2" height="21" fill="#b9b9b9"/><rect x="760" y="220" width="3.2" height="516" fill="#d9dcea" fill-opacity=".9"/></svg>
</div>
<!-- scrollbars + bottom bar -->
<div style="left:1189px;top:199px;width:10px;height:537px;background:#f6f6f6;border-left:1px solid #dcdcdc;box-sizing:border-box"></div>
<div style="left:1190px;top:381px;width:8px;height:30px;background:#c4c4c4"></div>
<div style="left:1189px;top:708px;width:10px;height:28px;background:#fafafa;border-top:1px solid #ddd;border-left:1px solid #dcdcdc;box-sizing:border-box"></div>
<div style="left:1191.500px;top:711px;border:2.500px solid transparent;border-bottom:4px solid #999;"></div>
<div style="left:1189px;top:722px;width:10px;height:1px;background:#ddd"></div>
<div style="left:1191.500px;top:727px;border:2.500px solid transparent;border-top:4px solid #999;"></div>
<div style="left:35px;top:736px;width:1164px;height:10px;background:#f8f8f8;"></div>
<div style="left:763px;top:736px;width:426px;height:10px;background:#f3f3f3;border-top:1px solid #e2e2e2;box-sizing:border-box"></div>
<div style="left:764px;top:738px;width:96px;height:7px;background:#c6c6c6"></div>
<div style="left:760px;top:736px;width:3px;height:10px;background:#d3d6e0"></div>
<div style="left:1162px;top:736px;width:27px;height:10px;background:#fafafa;border-left:1px solid #ddd;border-top:1px solid #e2e2e2;box-sizing:border-box"></div>
<div style="left:1175px;top:736px;width:1px;height:10px;background:#ddd"></div>
<div style="left:1164px;top:738.500px;border:2.500px solid transparent;border-right:4px solid #888;"></div>
<div style="left:1180px;top:738.500px;border:2.500px solid transparent;border-left:4px solid #888;"></div>
<div style="left:35px;top:746px;width:1164px;height:32px;background:#ececec;border-top:1px solid #dadada;box-sizing:border-box"></div>
<div style="left:77.500px;top:756px;width:10.500px;height:9.500px;background:linear-gradient(#666 0 1.500px,transparent 1.500px 2.700px,#666 2.700px 4.200px,transparent 4.200px 5.400px,#666 5.400px 6.900px,transparent 6.900px 8.100px,#666 8.100px 9.500px)"></div>
<div style="left:108px;top:746px;width:136px;height:24px;background:#fff;border:1px solid #cfcfcf;border-top:none;box-sizing:border-box;border-radius:0 0 2px 2px;box-shadow:0 1px 1px rgba(0,0,0,.12)"></div>
<div style="left:114px;top:750px;font-size:11.100px;color:#4a4a4a;white-space:nowrap">Ризультатэ рейдафф</div>
<div style="left:231px;top:755px;border:3px solid transparent;border-top:3.500px solid #b5b5b5;"></div>
<svg class="abs" style="left:1166.500px;top:754px" width="15.500" height="18.500" viewBox="0 0 16 19"><path d="M1.500 0h13A1.500 1.500 0 0 1 16 1.500v13a1.500 1.500 0 0 1-1.500 1.500H10.500L8 18.500 5.500 16H1.500A1.500 1.500 0 0 1 0 14.500v-13A1.500 1.500 0 0 1 1.500 0z" fill="#737373"/><path d="M8 2.500l1.500 4L13.500 8l-4 1.500L8 13.500 6.500 9.500 2.500 8l4-1.500z" fill="#fff"/></svg>
<!-- Opera sidebar -->
<div id="side">
  <div style="left:8.200px;top:8.200px;width:17.600px;height:17.600px;border-radius:50%;background:linear-gradient(90deg,#ff2b40,#ee1b30 55%,#b4111f)"></div><div style="left:12.800px;top:10.800px;width:7.600px;height:12.400px;border-radius:50%;background:#1c1f22"></div>
  <svg style="left:8px;top:76.500px" width="17.500" height="18.500" viewBox="0 0 18 19"><path d="M9 0C4 0 0 3.700 0 8.400c0 2.600 1.200 4.900 3.200 6.400V18.500l3-1.700c.9.300 1.800.4 2.800.4 5 0 9-3.700 9-8.400S14 0 9 0z" fill="#2e8cf5"/><path d="M3.500 10.800l4.600-4.800 2.300 2.300 4.200-2.300-4.600 4.900-2.300-2.400z" fill="#fff"/></svg>
  <svg style="left:8.500px;top:114.300px" width="17.500" height="17.500" viewBox="0 0 20 20"><path d="M10 .5a9.300 9.300 0 0 0-8 14L.6 19.400l5-1.300A9.300 9.300 0 1 0 10 .5z" fill="#e8e8e8"/><path d="M10 2a7.800 7.800 0 0 0-6.600 12l-.9 3.300 3.400-.9A7.800 7.800 0 1 0 10 2z" fill="#3fbf4f"/><path d="M7.300 5.600c-.3-.6-.5-.6-.8-.6-.8 0-1.500.8-1.500 1.900 0 2.400 3.500 6.300 6.600 6.600 1.300.1 2.300-.700 2.400-1.500.100-.4 0-.6-.3-.8l-1.600-.8c-.3-.1-.5-.1-.7.2l-.6.800c-.2.200-.4.200-.7.100-1.200-.5-2.400-1.600-3-2.800-.1-.3 0-.5.100-.6l.6-.7c.2-.2.2-.4.100-.7z" fill="#fff"/></svg>
  <div style="left:9px;top:155px;width:15.500px;height:15.500px;border-radius:4px;background:#5876a8"></div>
  <div style="left:11px;top:158px;font-size:8px;font-weight:bold;color:#fff;letter-spacing:-0.800px;line-height:9px">VK</div>
  <div style="left:12px;top:187.500px;width:11px;height:1px;background:#555"></div>
  <svg style="left:9.800px;top:208px" width="14.800" height="14.800" viewBox="0 0 17 17"><circle cx="6.800" cy="6.800" r="5.300" stroke="#d6d6d6" stroke-width="1.500" fill="none"/><path d="M10.800 10.800l5 5" stroke="#d6d6d6" stroke-width="2.200"/><path d="M3.800 6.800a3 3 0 0 1 3-3" stroke="#d6d6d6" stroke-width="1" fill="none"/></svg>
  <svg style="left:8.800px;top:246.500px" width="15.500" height="14.500" viewBox="0 0 18 16"><path d="M1 1l15.500 7L1 15l3.500-7z" stroke="#d6d6d6" stroke-width="1.500" fill="none" stroke-linejoin="round"/></svg>
  <svg style="left:8.800px;top:283.800px" width="15.500" height="13.500" viewBox="0 0 18 15"><path d="M1 3.500h3.500l1.500-2.500h6l1.500 2.500H17v10.500H1z" stroke="#d6d6d6" stroke-width="1.500" fill="none" stroke-linejoin="round"/><circle cx="9" cy="8.500" r="2.800" stroke="#d6d6d6" stroke-width="1.500" fill="none"/></svg>
  <div style="left:12px;top:317px;width:11px;height:1px;background:#555"></div>
  <svg style="left:9.700px;top:337.500px" width="13.500" height="12" viewBox="0 0 16 15"><g fill="none" stroke="#d6d6d6" stroke-width="1.400"><rect x=".7" y=".7" width="5.600" height="5" rx="1"/><rect x="9.700" y=".7" width="5.600" height="5" rx="1"/><rect x=".7" y="9.300" width="5.600" height="5" rx="1"/><rect x="9.700" y="9.300" width="5.600" height="5" rx="1"/></g></svg>
  <svg style="left:8.800px;top:375.400px" width="15.500" height="13.500" viewBox="0 0 18 16"><path d="M9 15C3.500 10.500 1 8 1 5a4 4 0 0 1 8-1.500A4 4 0 0 1 17 5c0 3-2.500 5.500-8 10z" stroke="#d6d6d6" stroke-width="1.500" fill="none" stroke-linejoin="round"/></svg>
  <svg style="left:8.800px;top:414.400px" width="15" height="12" viewBox="0 0 17 14"><rect x="3.800" y="1" width="12.400" height="12" rx="1.200" stroke="#d6d6d6" stroke-width="1.500" fill="none"/><path d="M3.800 3.500H1v8a1.500 1.500 0 0 0 1.500 1.500h3" stroke="#d6d6d6" stroke-width="1.500" fill="none"/><path d="M6.500 4.800h7M6.500 7.600h4.500" stroke="#d6d6d6" stroke-width="1.400"/></svg>
  <svg style="left:8.800px;top:451.300px" width="15.200" height="15.200" viewBox="0 0 18 18"><circle cx="9" cy="9" r="7.500" stroke="#d6d6d6" stroke-width="1.500" fill="none"/><path d="M9 4.500V9l3 2.500" stroke="#d6d6d6" stroke-width="1.500" fill="none"/></svg>
  <svg style="left:9px;top:738px" width="15.200" height="11.400" viewBox="0 0 16 12"><rect x=".8" y=".8" width="14.400" height="10.400" rx="1" stroke="#d6d6d6" stroke-width="1.600" fill="none"/><rect x="1" y="1" width="5" height="10" fill="#d6d6d6"/></svg>
</div>
<div id="frame"></div>
</div>
</body>
</html>
